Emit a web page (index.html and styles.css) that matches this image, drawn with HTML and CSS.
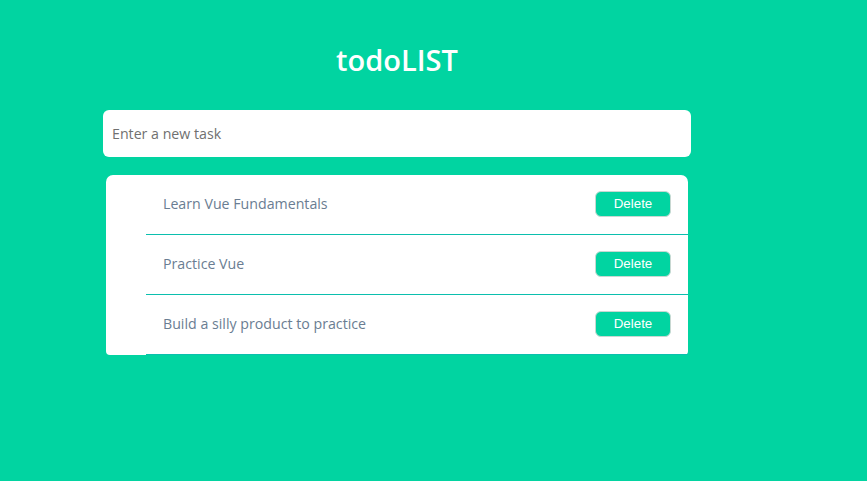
FILE: index.html
```html
<!DOCTYPE html>
<html lang="en">
<head>
<meta charset="utf-8">
<title>todoLIST</title>
<link rel="stylesheet" href="styles.css">
</head>
<body>
<main class="app">
  <h1 class="title">todoLIST</h1>
  <input class="new-task" type="text" placeholder="Enter a new task">
  <ul class="tasks">
    <li class="task"><span class="task-text">Learn Vue Fundamentals</span><button class="delete">Delete</button></li>
    <li class="task"><span class="task-text">Practice Vue</span><button class="delete">Delete</button></li>
    <li class="task"><span class="task-text">Build a silly product to practice</span><button class="delete">Delete</button></li>
  </ul>
</main>
</body>
</html>
```

FILE: styles.css
```css
html, body {
  margin: 0;
  padding: 0;
  height: 100%;
}
body {
  background: #01d4a1;
  font-family: "Open Sans", "Noto Sans", sans-serif;
}
.app {
  width: 588px;
  margin-left: 103px;
  padding-top: 40px;
}
.title {
  margin: 0 0 23px;
  height: 47px;
  text-align: center;
  color: #fff;
  font-size: 29px;
  font-weight: 600;
  line-height: 40px;
}
.new-task {
  display: block;
  box-sizing: border-box;
  width: 100%;
  height: 47px;
  border: none;
  border-radius: 6px;
  padding: 0 9px;
  font-family: inherit;
  font-size: 14.2px;
  color: #555;
  outline: none;
}
.new-task::placeholder {
  color: #707070;
}
.tasks {
  list-style: none;
  margin: 18px 3px 0;
  padding: 0 0 0 40px;
  background: #fff;
  border-radius: 7px 7px 4px 4px;
}
.task {
  display: flex;
  align-items: center;
  justify-content: space-between;
  height: 59px;
  padding: 0 17px;
  border-bottom: 1px solid #0bbfae;
}
.task-text {
  color: #6a7d92;
  font-size: 14.2px;
  margin-top: -2px;
}
.delete {
  width: 76px;
  height: 26px;
  margin-top: -2px;
  background: #01d4a1;
  border: 1px solid #c8d8d2;
  border-radius: 6px;
  color: #fff;
  font-family: "Liberation Sans", Arial, sans-serif;
  font-size: 13.33px;
  cursor: pointer;
}
```
